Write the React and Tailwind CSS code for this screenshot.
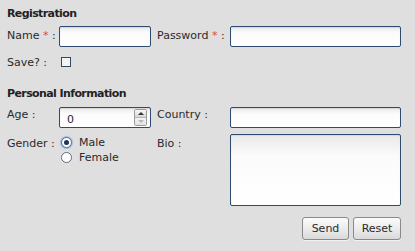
function TextBox({ className = '', children }) {
    return (
        <div
            className={`border border-[#2f4a6f] rounded-[2px] bg-gradient-to-b from-[#e9e9e9] via-[#fbfbfb] via-30% to-white shadow-[inset_0_1px_1px_rgba(0,0,0,0.08)] ${className}`}
        >
            {children}
        </div>
    );
}

function Radio({ checked, label }) {
    return (
        <div className="flex items-center h-[15px]">
            <span
                className={`flex items-center justify-center w-[11px] h-[11px] rounded-full border ${
                    checked ? 'border-[#3d6fb3] shadow-[0_0_1px_1px_rgba(90,140,210,0.45)]' : 'border-[#5f6d7e]'
                } bg-white`}
            >
                {checked && <span className="w-[5px] h-[5px] rounded-full bg-[#1f3550]" />}
            </span>
            <span className="ml-[7px]">{label}</span>
        </div>
    );
}

export default function App() {
    return (
        <div
            className="w-[415px] h-[251px] bg-[#dfdfdf] pl-[7px] pr-[14px] pt-[7px] text-[11px] leading-[13px] text-[#2a2a2a]"
            style={{ fontFamily: '"DejaVu Sans", sans-serif' }}
        >
            {/* Registration */}
            <div className="font-bold text-[#222] tracking-[-0.6px]">Registration</div>
            <div className="grid grid-cols-[52px_92px_79px_171px] items-center mt-[6px]">
                <div className="-mt-[3px]">
                    Name <span className="text-[#e0453f]">*</span> :
                </div>
                <TextBox className="h-[21px]" />
                <div className="pl-[6px] -mt-[3px]">
                    Password <span className="text-[#e0453f]">*</span> :
                </div>
                <TextBox className="h-[21px]" />
            </div>
            <div className="flex items-center mt-[10px] h-[10px]">
                <div className="w-[54px]">Save? :</div>
                <span className="w-[10px] h-[10px] border border-[#36485f] bg-[#f3f3f3]" />
            </div>

            {/* Personal Information */}
            <div className="font-bold text-[#222] tracking-[-0.6px] mt-[20px]">Personal Information</div>
            <div className="grid grid-cols-[52px_92px_79px_171px] items-start mt-[7px]">
                <div className="pt-[1px]">Age :</div>
                <TextBox className="h-[21px] flex items-center pl-[7px] pr-[3px] pt-[3px]">
                    <span className="flex-1">0</span>
                    <span className="flex flex-col w-[13px] h-[17px] -mt-[3px] border border-[#9a9a9a] rounded-[2px] overflow-hidden">
                        <span className="flex-1 flex items-center justify-center bg-gradient-to-b from-[#fafafa] to-[#d6d6d6] border-b border-[#b5b5b5]">
                            <span className="w-0 h-0 border-l-[3px] border-r-[3px] border-b-[3px] border-l-transparent border-r-transparent border-b-[#333]" />
                        </span>
                        <span className="flex-1 flex items-center justify-center bg-gradient-to-b from-[#f4f4f4] to-[#e2e2e2]">
                            <span className="w-0 h-0 border-l-[3px] border-r-[3px] border-t-[3px] border-l-transparent border-r-transparent border-t-[#b8b8b8]" />
                        </span>
                    </span>
                </TextBox>
                <div className="pl-[6px] pt-[1px]">Country :</div>
                <TextBox className="h-[21px]" />
            </div>
            <div className="grid grid-cols-[52px_171px_171px] mt-[6px]">
                <div className="pt-[3px]">Gender :</div>
                <div className="flex">
                    <div className="w-[2px]" />
                    <div className="flex flex-col pt-[1px]">
                        <Radio checked label="Male" />
                        <Radio label="Female" />
                    </div>
                    <div className="ml-auto w-[73px] pt-[3px]">Bio :</div>
                </div>
                <TextBox className="h-[72px]" />
            </div>

            {/* Actions */}
            <div className="flex justify-end gap-[4px] mt-[11px]">
                <button className="w-[47px] h-[23px] border border-[#8a8a8a] rounded-[3px] bg-gradient-to-b from-[#fbfbfb] via-[#ececec] to-[#dadada] shadow-[0_1px_0_rgba(255,255,255,0.6)]">
                    Send
                </button>
                <button className="w-[48px] h-[23px] border border-[#8a8a8a] rounded-[3px] bg-gradient-to-b from-[#fbfbfb] via-[#ececec] to-[#dadada] shadow-[0_1px_0_rgba(255,255,255,0.6)]">
                    Reset
                </button>
            </div>
        </div>
    );
}
